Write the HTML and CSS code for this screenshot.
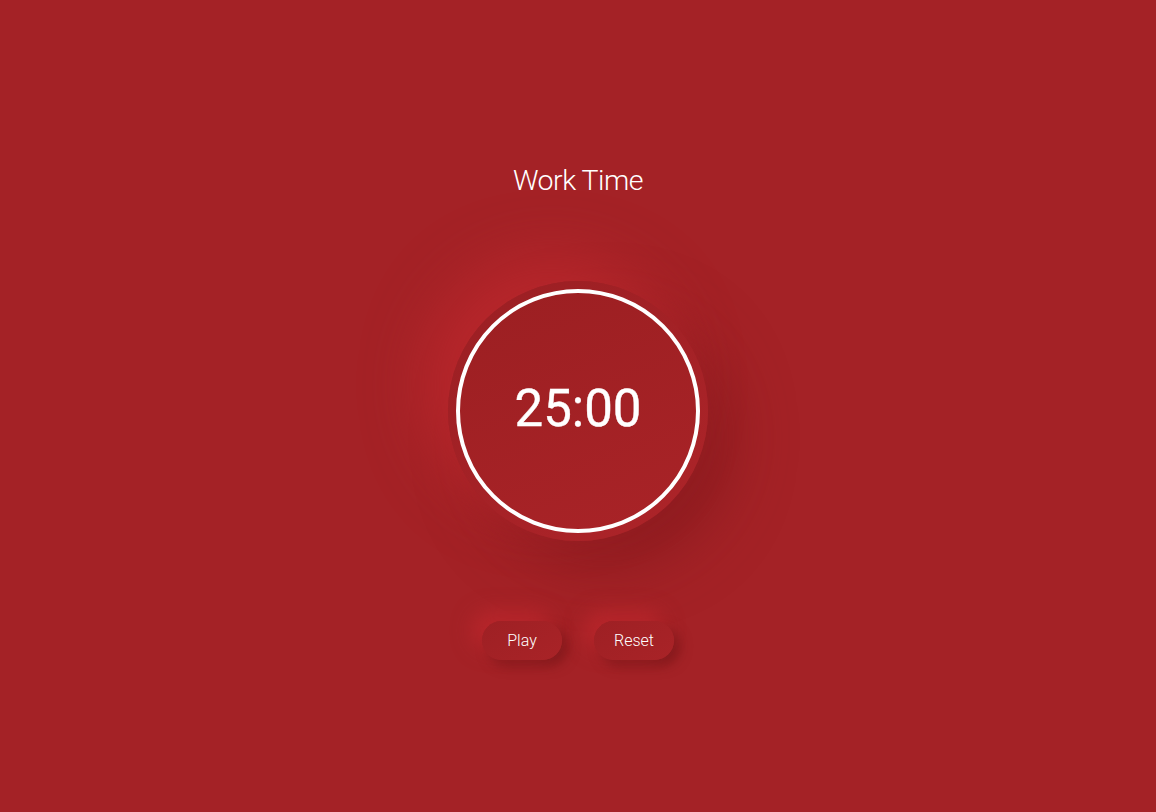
FILE: index.html
```html
<!DOCTYPE html>
<html lang="en">
<head>
<meta charset="utf-8">
<title>Pomodoro</title>
<link rel="stylesheet" href="styles.css">
</head>
<body>
<main class="app">
  <h1 class="title">Work Time</h1>
  <div class="dial">
    <div class="ring">
      <span class="time">25:00</span>
    </div>
  </div>
  <div class="controls">
    <button class="btn">Play</button>
    <button class="btn">Reset</button>
  </div>
</main>
</body>
</html>
```

FILE: styles.css
```css
html, body {
  margin: 0;
  height: 100%;
}
body {
  background: #a42226;
  font-family: Roboto, "Liberation Sans", sans-serif;
  color: #fff;
}
.app {
  height: 100%;
  display: flex;
  flex-direction: column;
  align-items: center;
  justify-content: flex-start;
  padding-top: 163px;
  box-sizing: border-box;
}
.title {
  margin: 0;
  font-size: 28.5px;
  font-weight: 300;
  line-height: 36px;
  letter-spacing: -0.5px;
}
.dial {
  margin-top: 82px;
  width: 260px;
  height: 260px;
  border-radius: 50%;
  background: linear-gradient(145deg, #9a1f23, #ae2429);
  box-shadow: -26px -26px 56px rgba(190, 40, 46, 0.75), 26px 26px 56px rgba(120, 22, 25, 0.5);
  display: flex;
  align-items: center;
  justify-content: center;
}
.ring {
  width: 236px;
  height: 236px;
  border: 4px solid #fff;
  border-radius: 50%;
  background: linear-gradient(160deg, #9c1f22, #a92327);
  display: flex;
  align-items: center;
  justify-content: center;
}
.time {
  font-size: 51px;
  font-weight: 400;
  line-height: 1;
  margin-top: -6px;
  -webkit-text-stroke: 0.4px #fff;
}
.controls {
  margin-top: 80px;
  display: flex;
  gap: 32px;
}
.btn {
  width: 80px;
  height: 39px;
  border: none;
  border-radius: 20px;
  background: linear-gradient(145deg, #9e2024, #a92327);
  color: #fff;
  font-family: Roboto, "Liberation Sans", sans-serif;
  font-size: 16px;
  font-weight: 300;
  box-shadow: -10px -10px 20px rgba(192, 40, 46, 0.7), 6px 6px 12px rgba(110, 20, 22, 0.55);
  padding: 0;
}
```
